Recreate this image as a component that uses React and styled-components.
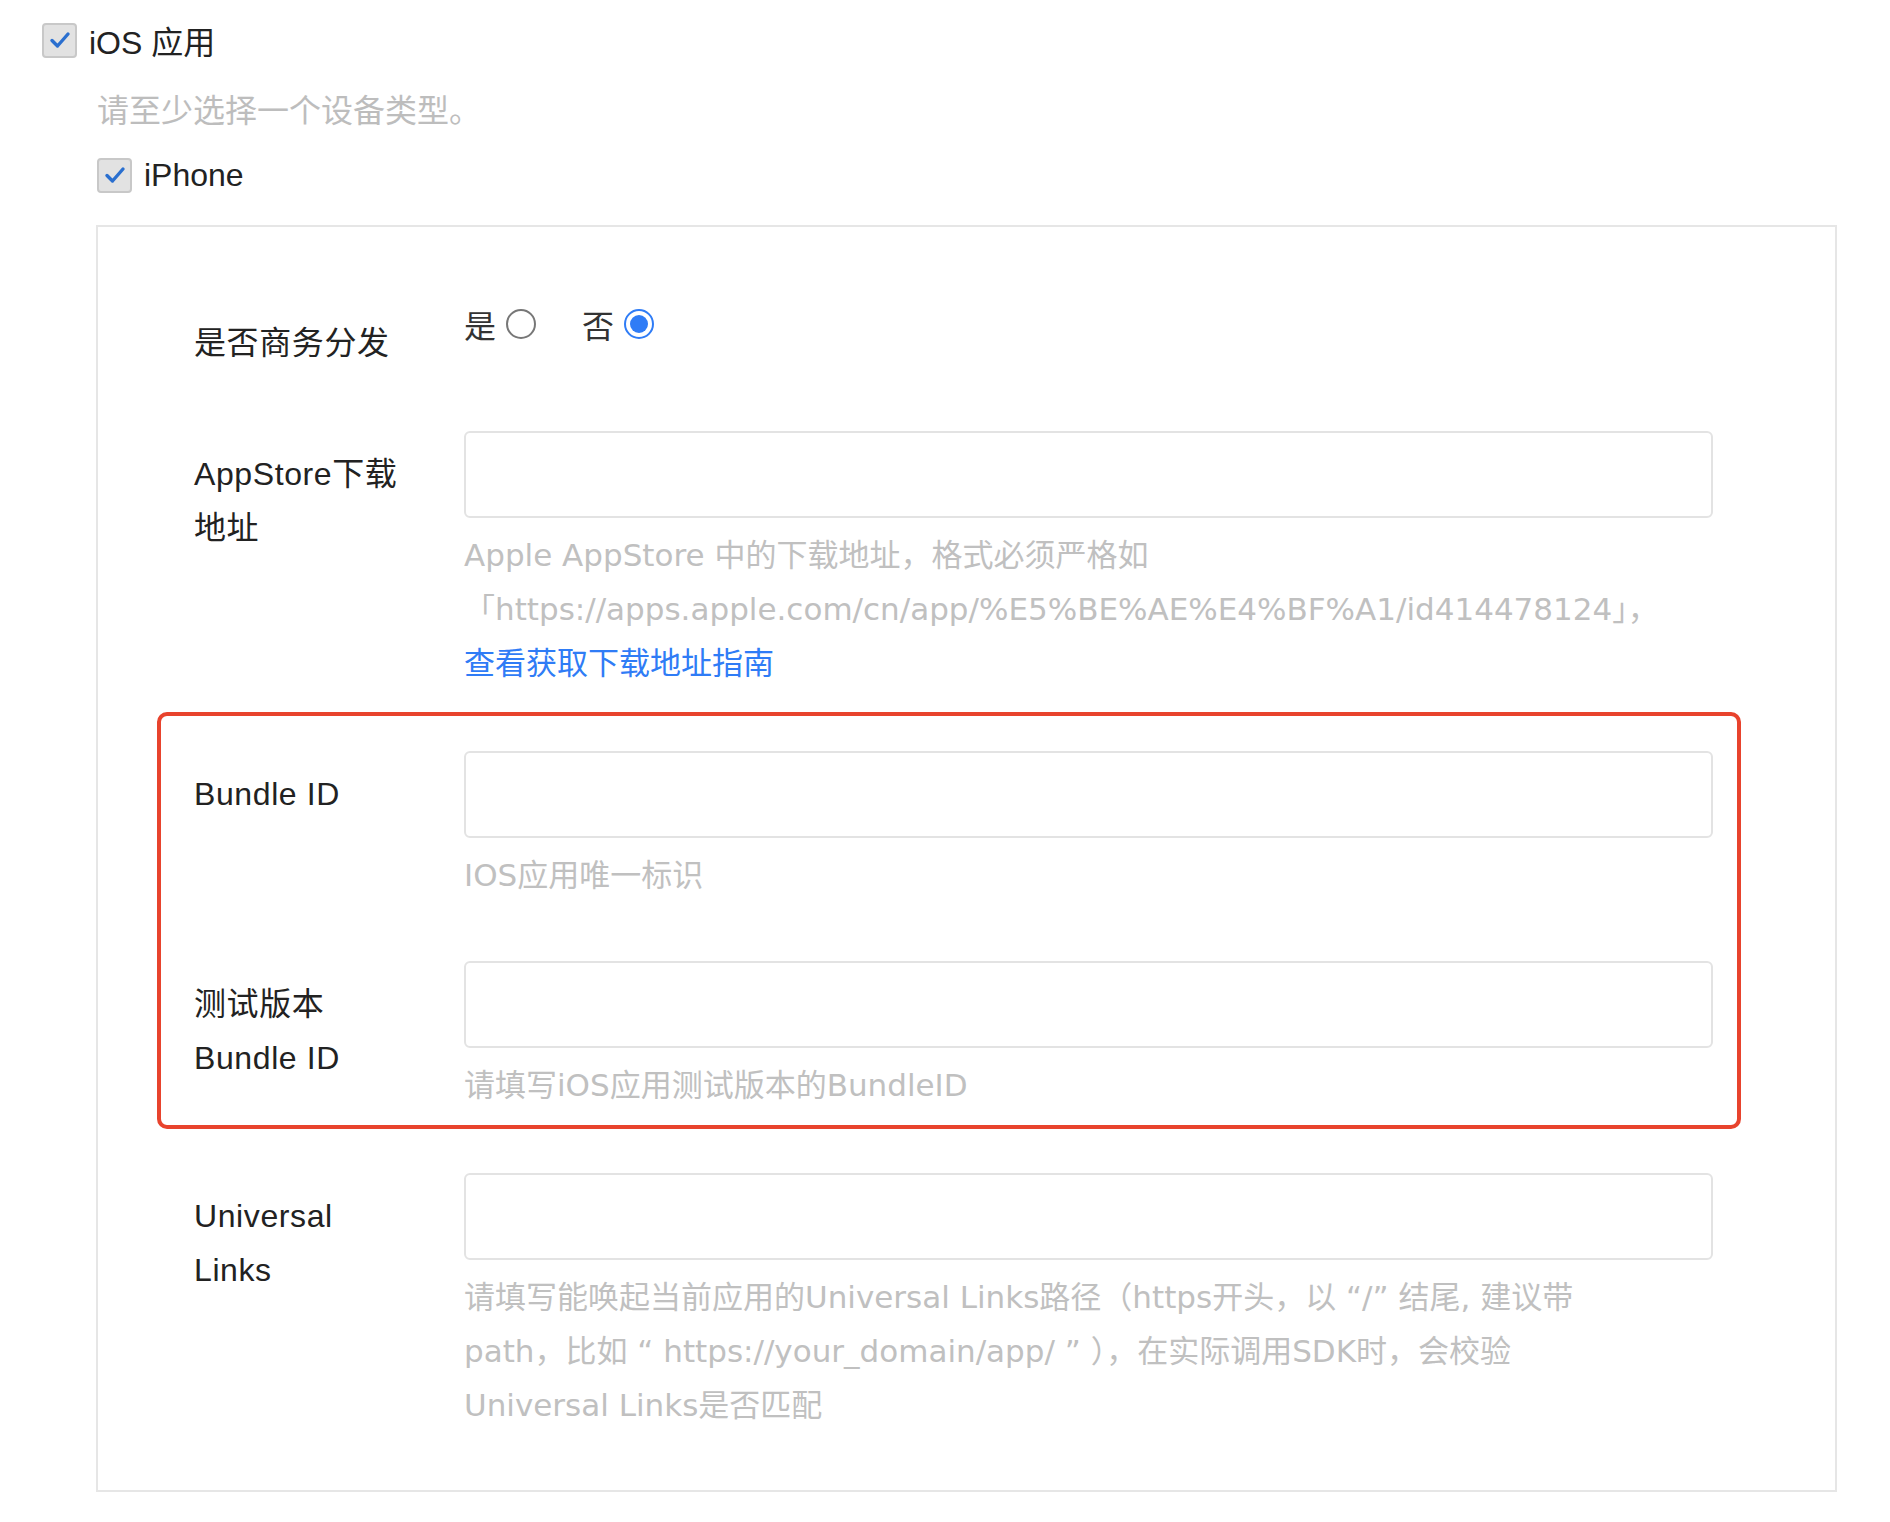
import React from 'react'
import styled, {createGlobalStyle} from 'styled-components'

const Global = createGlobalStyle`
  body {
    margin: 0;
    background: #fff;
    font-family: "Liberation Sans", "Noto Sans CJK SC", sans-serif;
    color: #333;
  }
`

const Page = styled.div`
  padding: 22px 53px 20px 42px;
`

const CheckRow = styled.div`
  display: flex;
  align-items: center;
  gap: 12px;
  margin-left: ${p => p.indent || 0}px;
  height: 36px;
  font-size: 32px;
  color: #222;
`

const CheckBoxEl = styled.span`
  width: 35px;
  height: 35px;
  box-sizing: border-box;
  border: 2px solid #c8c8c8;
  border-radius: 4px;
  background: #e2e2e2;
  display: flex;
  align-items: center;
  justify-content: center;
`

const Hint = styled.div`
  margin: 37px 0 30px 55px;
  font-size: 32px;
  line-height: 32px;
  color: #bdbdbd;
`

const Panel = styled.div`
  margin: 32px 0 0 54px;
  border: 2px solid #e6e6e6;
  padding: 73px 40px 58px 96px;
`

const Row = styled.div`
  display: flex;
  margin-top: ${p => p.gap || 0}px;
`

const Label = styled.div`
  width: 270px;
  flex: 0 0 270px;
  box-sizing: border-box;
  padding: 16px 20px 0 0;
  font-size: 32px;
  line-height: 54px;
  color: #222;
  letter-spacing: 0.6px;
`

const Control = styled.div`
  flex: 1;
  min-width: 0;
`

const Input = styled.div`
  width: 1249px;
  height: 87px;
  box-sizing: border-box;
  border: 2px solid #e3e3e3;
  border-radius: 6px;
  background: #fff;
`

const Help = styled.div`
  margin-top: 10px;
  font-family: "DejaVu Sans", "Noto Sans CJK SC", sans-serif;
  font-size: 31px;
  line-height: 54px;
  color: #c0c0c0;
  white-space: pre-line;
`

const Link = styled.a`
  color: #2f7cf6;
  text-decoration: none;
`

const Radios = styled.div`
  display: flex;
  align-items: center;
  height: 48px;
  gap: 46px;
  font-size: 32px;
  color: #333;
`

const RadioItem = styled.label`
  display: flex;
  align-items: center;
  gap: 10px;
`

const RadioDot = styled.span`
  width: 30px;
  height: 30px;
  box-sizing: border-box;
  border-radius: 50%;
  border: 2px solid ${p => (p.on ? '#2f7cf6' : '#777')};
  display: flex;
  align-items: center;
  justify-content: center;
  &::after {
    content: '';
    width: 18px;
    height: 18px;
    border-radius: 50%;
    background: ${p => (p.on ? '#2f7cf6' : 'transparent')};
  }
`

const Highlight = styled.div`
  margin: 22px 0 0 -37px;
  width: 1584px;
  box-sizing: border-box;
  border: 4px solid #e8432d;
  border-radius: 10px;
  padding: 35px 0 13px 33px;
`

const Check = () => (
    <CheckBoxEl>
        <svg width="22" height="22" viewBox="0 0 22 22">
            <path d="M3 11.5 L8.5 17 L19 5" fill="none" stroke="#2a6fcf" strokeWidth="3.4"
                  strokeLinecap="round" strokeLinejoin="round"/>
        </svg>
    </CheckBoxEl>
)

const Field = ({label, help, gap}) => (
    <Row gap={gap}>
        <Label>{label}</Label>
        <Control>
            <Input/>
            <Help>{help}</Help>
        </Control>
    </Row>
)

export default function App() {
    return (
        <Page>
            <Global/>
            <CheckRow><Check/>iOS 应用</CheckRow>
            <Hint>请至少选择一个设备类型。</Hint>
            <CheckRow indent={55}><Check/>iPhone</CheckRow>
            <Panel>
                <Row>
                    <Label>是否商务分发</Label>
                    <Radios>
                        <RadioItem>是<RadioDot/></RadioItem>
                        <RadioItem>否<RadioDot on/></RadioItem>
                    </Radios>
                </Row>
                <Field gap={61} label={<>AppStore下载<br/>地址</>} help={
                    <>
                        {'Apple AppStore 中的下载地址，格式必须严格如\n「https://apps.apple.com/cn/app/%E5%BE%AE%E4%BF%A1/id414478124」，\n'}
                        <Link href="#">查看获取下载地址指南</Link>
                    </>
                }/>
                <Highlight>
                    <Field label="Bundle ID" help="IOS应用唯一标识"/>
                    <Field gap={59} label={<>测试版本<br/>Bundle ID</>} help="请填写iOS应用测试版本的BundleID"/>
                </Highlight>
                <Field gap={44} label={<>Universal<br/>Links</>}
                       help={'请填写能唤起当前应用的Universal Links路径（https开头，以 “/” 结尾, 建议带\npath，比如 “ https://your_domain/app/ ” ），在实际调用SDK时，会校验\nUniversal Links是否匹配'}/>
            </Panel>
        </Page>
    )
}
